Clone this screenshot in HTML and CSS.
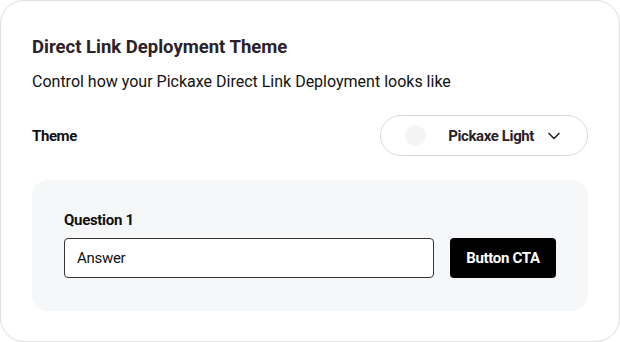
FILE: index.html
```html
<!DOCTYPE html>
<html lang="en">
<head>
    <meta charset="UTF-8">
    <title>Direct Link Deployment Theme</title>
    <link rel="stylesheet" href="styles.css">
</head>
<body>
    <div class="card">
        <h2 class="title">Direct Link Deployment Theme</h2>
        <p class="subtitle">Control how your Pickaxe Direct Link Deployment looks like</p>

        <div class="theme-row">
            <span class="label">Theme</span>
            <button class="select">
                <span class="swatch"></span>
                <span class="select-text">Pickaxe Light</span>
                <svg class="chevron" width="14" height="14" viewBox="0 0 14 14" fill="none">
                    <path d="M2 4.5L7 9.5L12 4.5" stroke="#2b2129" stroke-width="1.6" stroke-linecap="round" stroke-linejoin="round"/>
                </svg>
            </button>
        </div>

        <div class="preview">
            <div class="question">Question 1</div>
            <div class="answer-row">
                <div class="answer">Answer</div>
                <button class="cta">Button CTA</button>
            </div>
        </div>
    </div>
</body>
</html>
```

FILE: styles.css
```css
* {
    box-sizing: border-box;
}

body {
    margin: 0;
    background: #ffffff;
    font-family: Roboto, "Noto Sans", sans-serif;
    color: #111111;
}

.card {
    width: 620px;
    height: 342px;
    border: 1px solid #dedede;
    border-radius: 24px;
    background: #ffffff;
    padding: 34px 31px 0 31px;
}

.title {
    margin: 0;
    font-size: 18.5px;
    line-height: 24px;
    font-weight: 700;
    color: #2b2129;
}

.subtitle {
    margin: 11px 0 0 0;
    font-size: 16px;
    line-height: 24px;
    color: #111111;
}

.theme-row {
    display: flex;
    justify-content: space-between;
    align-items: center;
    margin-top: 21px;
}

.label {
    font-size: 15px;
    font-weight: 700;
    letter-spacing: -0.4px;
    color: #111111;
}

.select {
    display: flex;
    align-items: center;
    width: 208px;
    height: 41px;
    padding: 0 26px 0 24px;
    border: 1px solid #d9d9d9;
    border-radius: 21px;
    background: #ffffff;
    font-family: inherit;
}

.swatch {
    width: 21px;
    height: 21px;
    border-radius: 50%;
    background: #f3f4f6;
}

.select-text {
    margin-left: auto;
    font-size: 15px;
    font-weight: 700;
    letter-spacing: -0.4px;
    color: #2b2129;
}

.chevron {
    margin-left: 13px;
}

.preview {
    margin-top: 24px;
    height: 131px;
    background: #f6f7f9;
    border-radius: 16px;
    padding: 30px 32px 0 32px;
}

.question {
    font-size: 15px;
    font-weight: 700;
    line-height: 20px;
    letter-spacing: -0.3px;
    color: #111111;
}

.answer-row {
    display: flex;
    gap: 16px;
    margin-top: 8px;
}

.answer {
    flex: 1;
    height: 40px;
    display: flex;
    align-items: center;
    padding-left: 12px;
    border: 1px solid #333333;
    border-radius: 4px;
    background: #ffffff;
    font-size: 15px;
    letter-spacing: -0.3px;
    color: #111111;
}

.cta {
    width: 106px;
    height: 40px;
    border: none;
    border-radius: 4px;
    background: #000000;
    color: #ffffff;
    font-family: inherit;
    font-size: 15px;
    font-weight: 700;
    letter-spacing: -0.3px;
}
```
